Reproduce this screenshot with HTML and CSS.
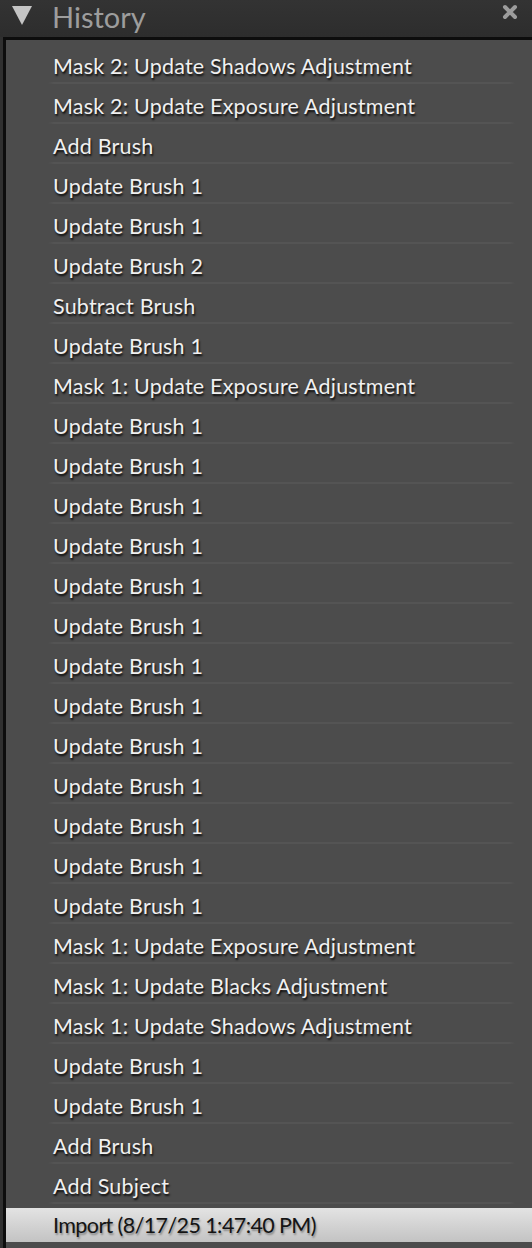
FILE: index.html
```html
<!DOCTYPE html>
<html lang="en">
<head>
  <meta charset="UTF-8" />
  <meta name="viewport" content="width=device-width, initial-scale=1" />
  <title>History</title>
  <link rel="stylesheet" href="styles.css">
</head>
<body>

  <!-- Panel header -->
  <div class="panel-header">
    <span class="toggle"></span>
    <span class="panel-title">History</span>
    <svg class="close" width="16" height="16" viewBox="0 0 16 16">
      <path d="M3 3 L13 13 M13 3 L3 13" stroke="#9c9c9c" stroke-width="4" stroke-linecap="round" />
    </svg>
  </div>

  <!-- History steps -->
  <ul class="history">
    <li class="step">Mask 2: Update Shadows Adjustment</li>
    <li class="step">Mask 2: Update Exposure Adjustment</li>
    <li class="step">Add Brush</li>
    <li class="step">Update Brush 1</li>
    <li class="step">Update Brush 1</li>
    <li class="step">Update Brush 2</li>
    <li class="step">Subtract Brush</li>
    <li class="step">Update Brush 1</li>
    <li class="step">Mask 1: Update Exposure Adjustment</li>
    <li class="step">Update Brush 1</li>
    <li class="step">Update Brush 1</li>
    <li class="step">Update Brush 1</li>
    <li class="step">Update Brush 1</li>
    <li class="step">Update Brush 1</li>
    <li class="step">Update Brush 1</li>
    <li class="step">Update Brush 1</li>
    <li class="step">Update Brush 1</li>
    <li class="step">Update Brush 1</li>
    <li class="step">Update Brush 1</li>
    <li class="step">Update Brush 1</li>
    <li class="step">Update Brush 1</li>
    <li class="step">Update Brush 1</li>
    <li class="step">Mask 1: Update Exposure Adjustment</li>
    <li class="step">Mask 1: Update Blacks Adjustment</li>
    <li class="step">Mask 1: Update Shadows Adjustment</li>
    <li class="step">Update Brush 1</li>
    <li class="step">Update Brush 1</li>
    <li class="step">Add Brush</li>
    <li class="step">Add Subject</li>
    <li class="step selected">Import (8/17/25 1:47:40 PM)</li>
  </ul>

</body>
</html>
```

FILE: styles.css
```css
body {
  margin: 0;
  background: #303030;
  font-family: Lato, "Open Sans", sans-serif;
  height: 1248px;
  overflow: hidden;
}

.panel-header {
  height: 37px;
  display: flex;
  align-items: flex-start;
  background: linear-gradient(#333, #2d2d2d);
}

.toggle {
  width: 0;
  height: 0;
  margin: 6px 0 0 12px;
  border-left: 10px solid transparent;
  border-right: 10px solid transparent;
  border-top: 19px solid #c4c4c4;
}

.panel-title {
  margin-left: 20px;
  font-size: 29px;
  line-height: 34px;
  color: #9d9d9d;
}

.close {
  margin: 4px 14px 0 auto;
}

.history {
  list-style: none;
  margin: 0 0 0 3px;
  padding: 6px 0 0 0;
  background: #4c4c4c;
  border-top: 3px solid #0d0d0d;
  border-left: 3px solid #0d0d0d;
  height: 1248px;
}

.step {
  position: relative;
  height: 40px;
  line-height: 40px;
  padding-left: 47px;
  font-size: 21.5px;
  letter-spacing: 0.2px;
  color: #f0f0f0;
  text-shadow: 1px 2px 2px rgba(0, 0, 0, 0.85);
  white-space: nowrap;
}

.step::after {
  content: '';
  position: absolute;
  left: 42px;
  right: 17px;
  bottom: 2px;
  height: 2px;
  background: linear-gradient(to right, transparent, #545454 6px, #545454 calc(100% - 6px), transparent);
}

.step.selected {
  height: 34px;
  line-height: 34px;
  margin-top: 2px;
  letter-spacing: -0.6px;
  background: linear-gradient(#e3e3e3, #c3c3c3);
  color: #141414;
  text-shadow: 1px 2px 2px rgba(0, 0, 0, 0.35);
}

.step.selected::after { display: none; }
```
